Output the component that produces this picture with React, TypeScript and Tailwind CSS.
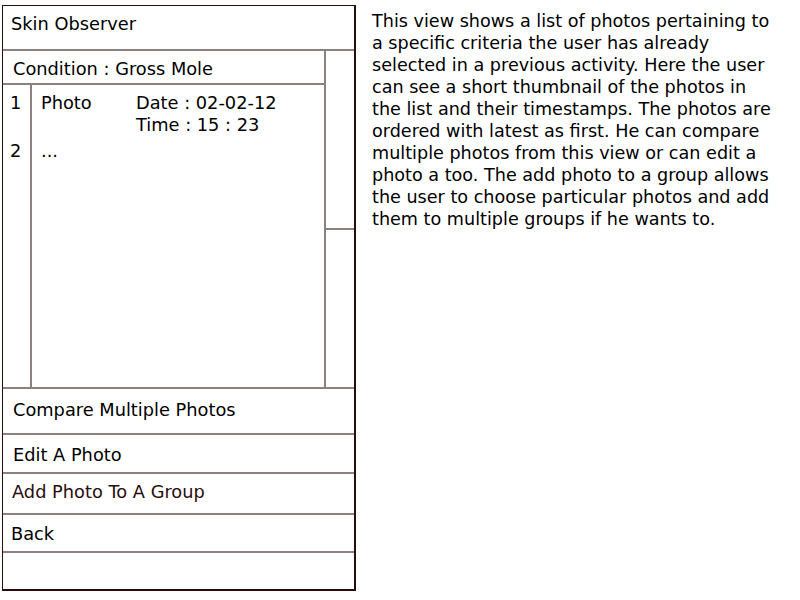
export default function App() {
  const line = "border-[#8c8080]";

  return (
    <div className="w-[800px] h-[600px] bg-white flex items-start text-black font-['DejaVu_Sans',sans-serif]">
      {/* Phone mockup */}
      <div className="ml-[2px] mt-[5px] w-[354px] h-[586px] flex flex-col border-t border-l border-r-2 border-b-2 border-[#2a0c0c] text-[17.8px]">
        <div className={`h-[45px] flex-none flex items-center pl-[8px] pb-[6px] border-b-2 ${line}`}>
          Skin Observer
        </div>

        <div className="h-[336px] flex-none flex">
          <div className={`flex-1 flex flex-col border-r-2 ${line}`}>
            <div className={`h-[34px] flex-none flex items-center pl-[10px] pt-[5px] border-b-2 ${line}`}>
              Condition : Gross Mole
            </div>
            <div className="flex-1 flex">
              <div className={`w-[29px] flex-none border-r-2 ${line} pl-[7px] pt-[7px] flex flex-col gap-[26px] leading-[22px]`}>
                <span>1</span>
                <span>2</span>
              </div>
              <div className="flex-1 pl-[9px] pt-[7px] leading-[22px]">
                <div className="flex">
                  <span className="w-[95px]">Photo</span>
                  <div className="flex flex-col">
                    <span>Date : 02-02-12</span>
                    <span>Time : 15 : 23</span>
                  </div>
                </div>
                <div className="pt-[4px]">...</div>
              </div>
            </div>
          </div>
          <div className="w-[28px] flex-none flex flex-col">
            <div className={`h-[179px] border-b-2 ${line}`} />
            <div className="flex-1" />
          </div>
        </div>

        <div className={`h-[48px] flex-none flex items-center pl-[10px] pb-[2px] border-t-2 border-b-2 ${line}`}>
          Compare Multiple Photos
        </div>
        <div className={`h-[39px] flex-none flex items-center pl-[10px] pt-[4px] border-b-2 ${line}`}>
          Edit A Photo
        </div>
        <div className={`h-[41px] flex-none flex items-center pl-[9px] pb-[2px] border-b-2 text-[#2a0c0c] ${line}`}>
          Add Photo To A Group
        </div>
        <div className={`h-[38px] flex-none flex items-center pl-[8px] pt-[2px] border-b-2 ${line}`}>
          Back
        </div>
        <div className="flex-1" />
      </div>

      {/* Description */}
      <p className="ml-[16px] mt-[10px] w-[404px] text-[17.6px] leading-[22px]">
        This view shows a list of photos pertaining to a specific criteria the
        user has already selected in a previous activity. Here the user can see
        a short thumbnail of the photos in the list and their timestamps. The
        photos are ordered with latest as first. He can compare multiple photos
        from this view or can edit a photo a too. The add photo to a group
        allows the user to choose particular photos and add them to multiple
        groups if he wants to.
      </p>
    </div>
  );
}
